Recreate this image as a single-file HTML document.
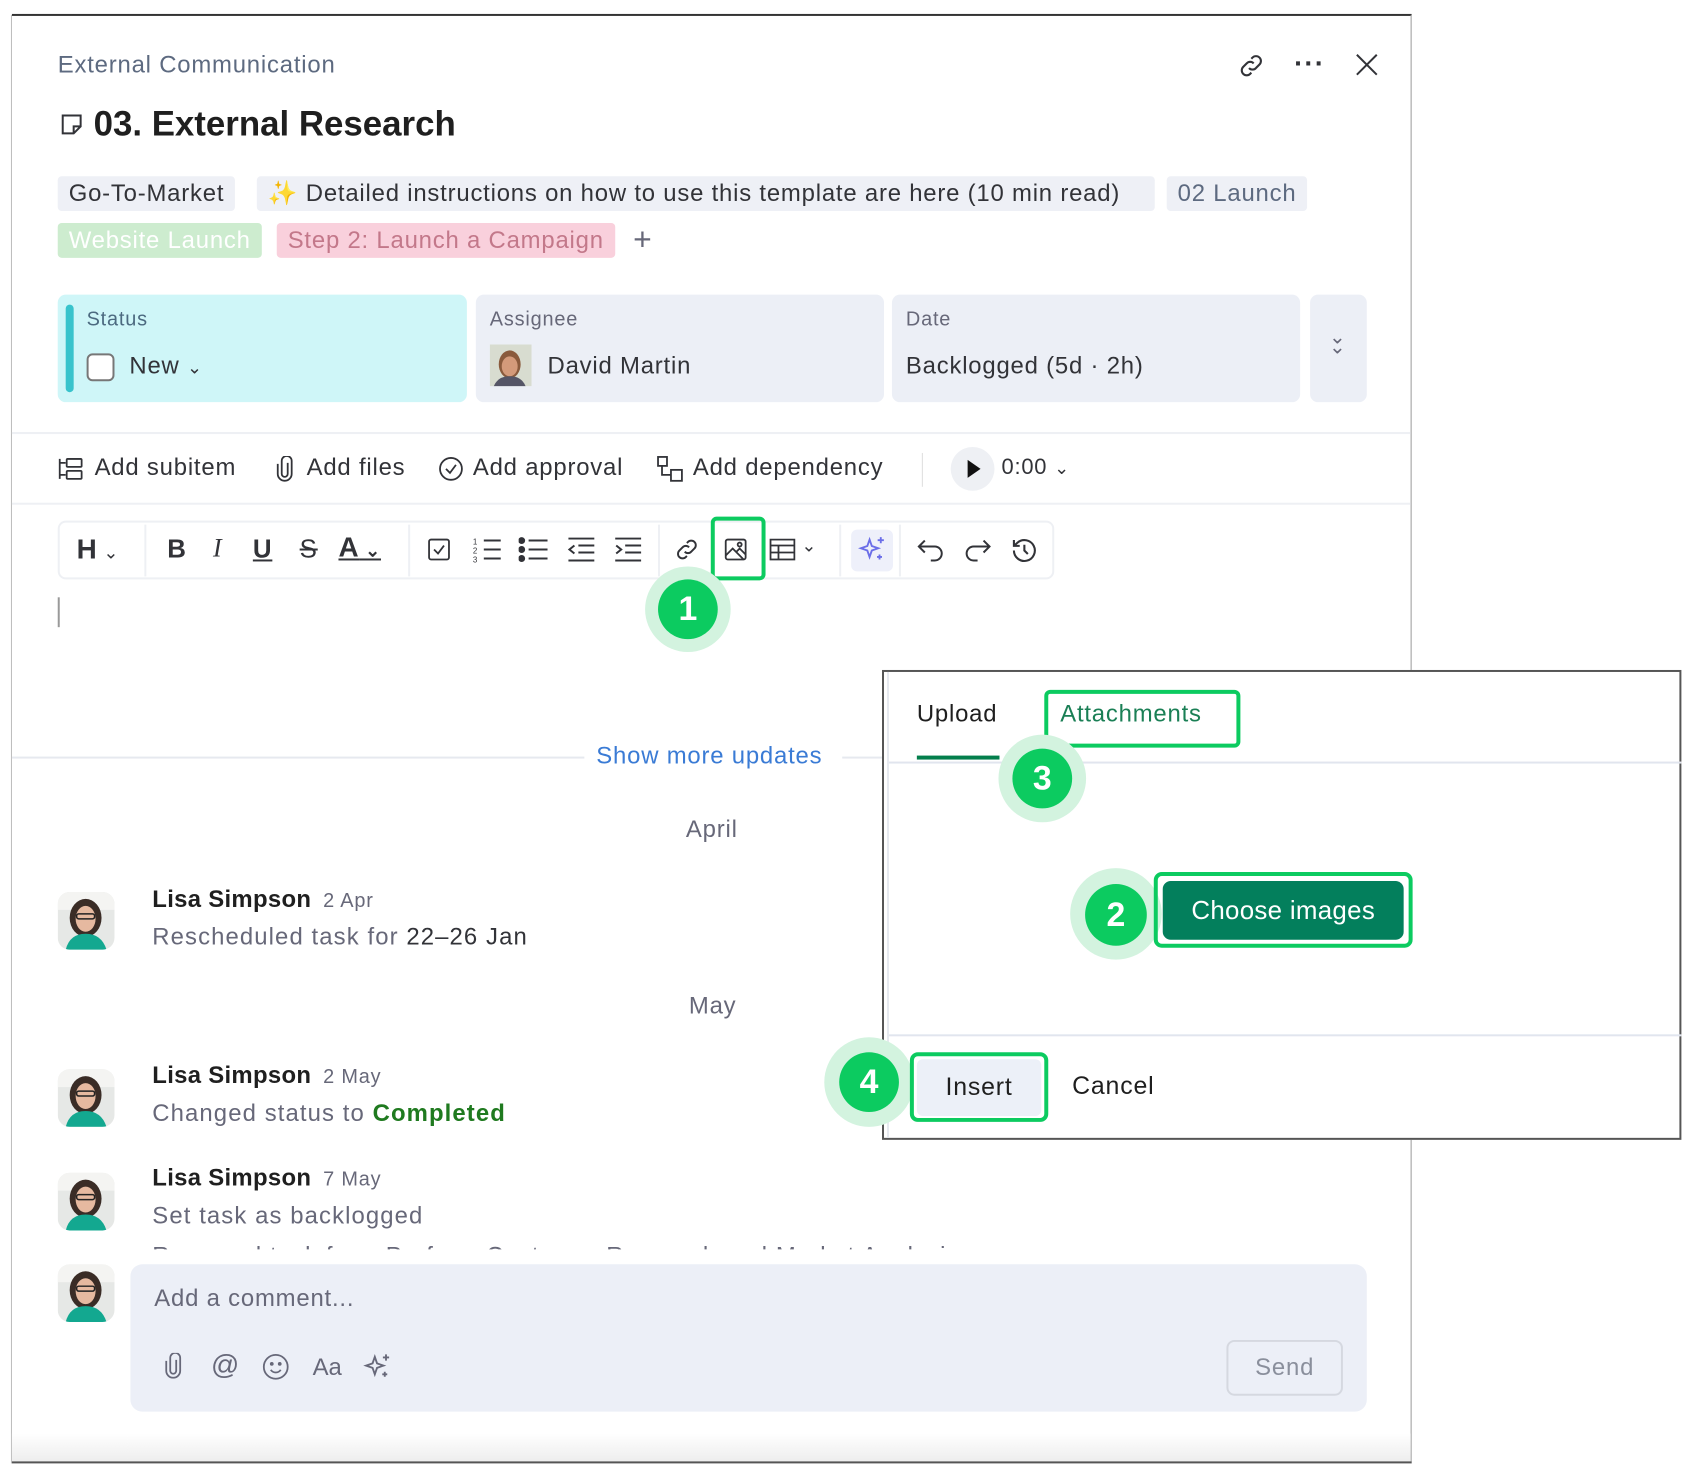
<!DOCTYPE html>
<html><head><meta charset="utf-8"><style>
*{box-sizing:border-box;margin:0;padding:0}
body{width:1701px;height:1476px;background:#fff;font-family:"Liberation Sans",sans-serif;color:#323338;position:relative;overflow:hidden;letter-spacing:0.8px}
#w{position:absolute;left:0;top:0;width:1701px;height:1476px;transform:scale(0.9955);transform-origin:0 0}
.a{position:absolute;white-space:nowrap}
.tag{position:absolute;height:35px;line-height:35px;font-size:24px;padding:0 11px;border-radius:4px;background:#eef0f6;color:#323338;white-space:nowrap}
.card{position:absolute;top:296px;height:108px;border-radius:8px;background:#eceff6}
.lbl{position:absolute;top:14px;font-size:20px;color:#676879}
.val{position:absolute;top:58px;font-size:24px;color:#323338;white-space:nowrap}
.ring{position:absolute;border-radius:50%;background:#d3f3df}
.dot{position:absolute;border-radius:50%;background:#0ccb60;color:#fff;font-weight:bold;font-size:34px;text-align:center;letter-spacing:0}
.gbox{position:absolute;border:4px solid #0ccb60;border-radius:6px}
.av{position:absolute;width:57px;height:58px;border-radius:12px;overflow:hidden}
.name{font-size:24px;font-weight:bold;color:#1f1f1f;letter-spacing:0.3px}
.date{font-size:20px;color:#676879;font-weight:normal;margin-left:12px}
.txt{font-size:24px;color:#676879;letter-spacing:1.1px}
</style></head><body><div id="w">
<svg width="0" height="0" style="position:absolute"><defs>
<symbol id="lisa" viewBox="0 0 57 58"><rect width="57" height="58" fill="#e6e8e6"/><rect x="0" y="0" width="57" height="18" fill="#f4f4f2"/><ellipse cx="28" cy="26" rx="16" ry="19" fill="#3a2c26"/><ellipse cx="28" cy="27" rx="10" ry="13" fill="#e6b9a0"/><rect x="19" y="22" width="18" height="5" rx="2" fill="none" stroke="#222" stroke-width="1.5"/><path d="M8 58 Q12 42 28 42 Q44 42 49 58Z" fill="#13a890"/></symbol>
</defs></svg>

<div class="a" style="left:12px;top:14px;width:1406px;height:2px;background:#333"></div>
<div class="a" style="left:11px;top:15px;width:1px;height:1455px;background:#bbb"></div>
<div class="a" style="left:1417px;top:15px;width:1px;height:660px;background:#999"></div>
<div class="a" style="left:1417px;top:1145px;width:1px;height:325px;background:#999"></div>
<div class="a" style="left:12px;top:1440px;width:1405px;height:30px;background:linear-gradient(#fff,#ececec)"></div>
<div class="a" style="left:12px;top:1468px;width:1406px;height:2px;background:#555"></div>

<div class="a" style="left:58px;top:52px;font-size:24px;color:#5d6a80">External Communication</div>
<svg class="a" style="left:60px;top:113px" width="24" height="24" viewBox="0 0 24 24" fill="none" stroke="#323338" stroke-width="2"><path d="M3 3h18v11l-7 7H3z M14 21v-7h7"/></svg>
<div class="a" style="left:94px;top:105px;font-size:35px;font-weight:bold;color:#1f1f1f;letter-spacing:0">03. External Research</div>

<svg class="a" style="left:1243px;top:52px" width="28" height="28" viewBox="0 0 24 24" fill="none" stroke="#323338" stroke-width="1.8"><path d="M10 14a4 4 0 0 0 6 0l3-3a4 4 0 0 0-6-6l-1 1"/><path d="M14 10a4 4 0 0 0-6 0l-3 3a4 4 0 0 0 6 6l1-1"/></svg>
<div class="a" style="left:1300px;top:48px;font-size:28px;font-weight:bold;letter-spacing:1px">···</div>
<svg class="a" style="left:1361px;top:53px" width="24" height="24" viewBox="0 0 24 24" stroke="#323338" stroke-width="2"><path d="M2 2l20 20M22 2L2 22"/></svg>

<div class="tag" style="left:58px;top:177px">Go-To-Market</div>
<div class="tag" style="left:258px;top:177px;width:902px"><span style="color:#f5c518">✨</span> Detailed instructions on how to use this template are here (10 min read)</div>
<div class="tag" style="left:1172px;top:177px;color:#5d6a80">02 Launch</div>
<div class="tag" style="left:58px;top:224px;background:#cdeccf;color:#fff">Website Launch</div>
<div class="tag" style="left:278px;top:224px;background:#f9d0dc;color:#c3788a">Step 2: Launch a Campaign</div>
<div class="a" style="left:636px;top:222px;font-size:32px;color:#676879">+</div>

<div class="card" style="left:58px;width:411px;background:#cff6f8"><div class="a" style="left:8px;top:10px;width:8px;height:88px;border-radius:4px;background:#38c3cc"></div>
<div class="lbl" style="left:29px;color:#4c6a80">Status</div>
<div class="a" style="left:29px;top:59px;width:28px;height:28px;border:2px solid #777;border-radius:6px;background:#fff"></div>
<div class="val" style="left:72px">New <span style="font-size:18px">⌄</span></div></div>
<div class="card" style="left:478px;width:410px"><div class="lbl" style="left:14px">Assignee</div>
<svg class="a" style="left:14px;top:50px" width="42" height="42" viewBox="0 0 42 42"><rect width="42" height="42" fill="#d8dcd0"/><ellipse cx="20" cy="20" rx="11" ry="14" fill="#8a5a3c"/><ellipse cx="20" cy="22" rx="8" ry="10" fill="#d49a7a"/><path d="M4 42 Q8 32 20 32 Q32 32 36 42Z" fill="#556"/></svg>
<div class="val" style="left:72px">David Martin</div></div>
<div class="card" style="left:896px;width:410px"><div class="lbl" style="left:14px">Date</div><div class="val" style="left:14px">Backlogged (5d · 2h)</div></div>
<div class="card" style="left:1316px;width:57px"><div class="a" style="left:19px;top:38px;font-size:20px;color:#676879;line-height:10px">⌄<br>⌄</div></div>

<div class="a" style="left:12px;top:434px;width:1405px;height:2px;background:#eef0f4"></div>
<svg class="a" style="left:58px;top:459px" width="26" height="24" viewBox="0 0 26 24" fill="none" stroke="#323338" stroke-width="1.8"><path d="M2 2v20M2 6h6M2 18h6"/><rect x="9" y="2" width="15" height="8" rx="1"/><rect x="9" y="14" width="15" height="8" rx="1"/></svg>
<div class="a" style="left:95px;top:456px;font-size:24px">Add subitem</div>
<svg class="a" style="left:277px;top:458px" width="18" height="26" viewBox="0 0 18 26" fill="none" stroke="#323338" stroke-width="1.8"><path d="M12 7v11a3 3 0 0 1-6 0V5a5 5 0 0 1 10 0v13a7 7 0 0 1-14 0V8"/></svg>
<div class="a" style="left:308px;top:456px;font-size:24px">Add files</div>
<svg class="a" style="left:440px;top:458px" width="26" height="26" viewBox="0 0 26 26" fill="none" stroke="#323338" stroke-width="1.8"><circle cx="13" cy="13" r="11"/><path d="M8 13l4 4 6-8"/></svg>
<div class="a" style="left:475px;top:456px;font-size:24px">Add approval</div>
<svg class="a" style="left:659px;top:457px" width="28" height="28" viewBox="0 0 28 28" fill="none" stroke="#323338" stroke-width="1.8"><rect x="2" y="2" width="9" height="9"/><rect x="15" y="15" width="11" height="11"/><path d="M6 11v9h9"/></svg>
<div class="a" style="left:696px;top:456px;font-size:24px">Add dependency</div>
<div class="a" style="left:926px;top:455px;width:1px;height:34px;background:#ddd"></div>
<div class="a" style="left:955px;top:449px;width:44px;height:44px;border-radius:50%;background:#eef0f4"></div>
<svg class="a" style="left:970px;top:461px" width="16" height="20"><path d="M2 1l13 9-13 9z" fill="#111"/></svg>
<div class="a" style="left:1006px;top:456px;font-size:22px">0:00 <span style="font-size:18px">⌄</span></div>
<div class="a" style="left:12px;top:505px;width:1405px;height:2px;background:#eef0f4"></div>

<div class="a" style="left:58px;top:523px;width:1001px;height:59px;border:2px solid #eef0f4;border-radius:8px"></div>
<div class="a" style="left:77px;top:536px;font-size:28px;color:#323338"><b>H</b><span style="font-size:18px"> ⌄</span></div>
<div class="a" style="left:145px;top:527px;width:2px;height:52px;background:#eef0f4"></div>
<div class="a" style="left:168px;top:536px;font-size:26px;font-weight:bold">B</div>
<div class="a" style="left:214px;top:536px;font-size:26px;font-style:italic;font-family:'Liberation Serif',serif">I</div>
<div class="a" style="left:254px;top:536px;font-size:26px;text-decoration:underline;font-weight:bold">U</div>
<div class="a" style="left:301px;top:536px;font-size:26px;text-decoration:line-through">S</div>
<div class="a" style="left:340px;top:534px;font-size:28px;text-decoration:underline;font-weight:bold">A<span style="font-size:18px;text-decoration:none"> ⌄</span></div>
<div class="a" style="left:410px;top:527px;width:2px;height:52px;background:#eef0f4"></div>
<svg class="a" style="left:429px;top:540px" width="24" height="24" viewBox="0 0 24 24" fill="none" stroke="#323338" stroke-width="1.8"><rect x="2" y="2" width="20" height="20" rx="2"/><path d="M7 12l4 4 6-8"/></svg>
<svg class="a" style="left:474px;top:538px" width="30" height="28" viewBox="0 0 30 28" fill="none" stroke="#323338" stroke-width="2"><path d="M12 5h17M12 14h17M12 23h17"/><text x="1" y="9" font-size="8" fill="#323338" stroke="none">1</text><text x="1" y="18" font-size="8" fill="#323338" stroke="none">2</text><text x="1" y="27" font-size="8" fill="#323338" stroke="none">3</text></svg>
<svg class="a" style="left:521px;top:538px" width="30" height="28" viewBox="0 0 30 28" stroke="#323338" stroke-width="2"><path d="M10 5h19M10 14h19M10 23h19"/><circle cx="3" cy="5" r="2.5" fill="#323338"/><circle cx="3" cy="14" r="2.5" fill="#323338"/><circle cx="3" cy="23" r="2.5" fill="#323338"/></svg>
<svg class="a" style="left:569px;top:538px" width="30" height="28" viewBox="0 0 30 28" fill="none" stroke="#323338" stroke-width="2"><path d="M2 3h26M12 10h16M12 17h16M2 25h26M8 10l-5 4 5 4"/></svg>
<svg class="a" style="left:616px;top:538px" width="30" height="28" viewBox="0 0 30 28" fill="none" stroke="#323338" stroke-width="2"><path d="M2 3h26M12 10h16M12 17h16M2 25h26M3 10l5 4-5 4"/></svg>
<div class="a" style="left:661px;top:527px;width:2px;height:52px;background:#eef0f4"></div>
<svg class="a" style="left:677px;top:539px" width="26" height="26" viewBox="0 0 24 24" fill="none" stroke="#323338" stroke-width="1.8"><path d="M10 14a4 4 0 0 0 6 0l3-3a4 4 0 0 0-6-6l-1 1"/><path d="M14 10a4 4 0 0 0-6 0l-3 3a4 4 0 0 0 6 6l1-1"/></svg>
<svg class="a" style="left:727px;top:540px" width="24" height="24" viewBox="0 0 24 24" fill="none" stroke="#323338" stroke-width="1.8"><rect x="2" y="2" width="20" height="20" rx="2"/><path d="M2 18l7-7 11 11M13 14l3-3 6 6"/><circle cx="16" cy="7" r="2"/></svg>
<div class="gbox" style="left:714px;top:519px;width:55px;height:64px"></div>
<svg class="a" style="left:773px;top:541px" width="26" height="22" viewBox="0 0 26 22" fill="none" stroke="#323338" stroke-width="1.8"><rect x="1" y="1" width="24" height="20"/><path d="M1 7h24M1 14h24M9 7v14"/></svg>
<div class="a" style="left:805px;top:538px;font-size:18px">⌄</div>
<div class="a" style="left:843px;top:527px;width:2px;height:52px;background:#eef0f4"></div>
<div class="a" style="left:855px;top:532px;width:42px;height:42px;border-radius:6px;background:#eef0fa"></div>
<svg class="a" style="left:861px;top:537px" width="30" height="30" viewBox="0 0 24 24" fill="none" stroke="#6b6ee8" stroke-width="1.5"><path d="M10 4l1.8 5.2L17 11l-5.2 1.8L10 18l-1.8-5.2L3 11l5.2-1.8z"/><path d="M19 2v5M16.5 4.5h5M18 16v4M16 18h4"/></svg>
<div class="a" style="left:903px;top:527px;width:2px;height:52px;background:#eef0f4"></div>
<svg class="a" style="left:921px;top:540px" width="28" height="24" viewBox="0 0 28 24" fill="none" stroke="#323338" stroke-width="2"><path d="M8 3L2 9l6 6M2 9h16a7 7 0 0 1 0 14h-4"/></svg>
<svg class="a" style="left:968px;top:540px" width="28" height="24" viewBox="0 0 28 24" fill="none" stroke="#323338" stroke-width="2"><path d="M20 3l6 6-6 6M26 9H10a7 7 0 0 0 0 14h4"/></svg>
<svg class="a" style="left:1015px;top:539px" width="28" height="28" viewBox="0 0 24 24" fill="none" stroke="#323338" stroke-width="1.8"><path d="M3 12a9 9 0 1 0 3-6.7L3 8M3 3v5h5M12 7v5l3 3"/></svg>

<div class="ring" style="left:648px;top:569px;width:86px;height:86px"></div>
<div class="dot" style="left:661px;top:582px;width:60px;height:60px;line-height:60px">1</div>
<div class="a" style="left:58px;top:600px;width:2px;height:30px;background:#999"></div>

<div class="a" style="left:12px;top:760px;width:575px;height:2px;background:#e6e9ef"></div>
<div class="a" style="left:846px;top:760px;width:42px;height:2px;background:#e6e9ef"></div>
<div class="a" style="left:599px;top:746px;font-size:24px;color:#3a7bd5">Show more updates</div>
<div class="a" style="left:689px;top:820px;font-size:24px;color:#676879">April</div>
<div class="a" style="left:692px;top:997px;font-size:24px;color:#676879">May</div>

<svg class="av" style="left:58px;top:896px"><use href="#lisa"/></svg>
<div class="a" style="left:153px;top:890px"><span class="name">Lisa Simpson</span><span class="date">2 Apr</span></div>
<div class="a txt" style="left:153px;top:928px">Rescheduled task for <span style="color:#323338">22–26 Jan</span></div>
<svg class="av" style="left:58px;top:1074px"><use href="#lisa"/></svg>
<div class="a" style="left:153px;top:1067px"><span class="name">Lisa Simpson</span><span class="date">2 May</span></div>
<div class="a txt" style="left:153px;top:1105px">Changed status to <span style="color:#1f7a1f;font-weight:bold">Completed</span></div>
<svg class="av" style="left:58px;top:1178px"><use href="#lisa"/></svg>
<div class="a" style="left:153px;top:1170px"><span class="name">Lisa Simpson</span><span class="date">7 May</span></div>
<div class="a txt" style="left:153px;top:1208px">Set task as backlogged</div>
<div class="a" style="left:153px;top:1246px;height:9px;overflow:hidden"><div class="txt" style="margin-top:2px">Removed task from Perform Customer Research and Market Analysis</div></div>

<svg class="av" style="left:58px;top:1270px"><use href="#lisa"/></svg>
<div class="a" style="left:131px;top:1270px;width:1242px;height:148px;border-radius:12px;background:#eceff7"></div>
<div class="a" style="left:155px;top:1291px;font-size:24px;color:#676879">Add a comment...</div>
<svg class="a" style="left:165px;top:1359px" width="18" height="26" viewBox="0 0 18 26" fill="none" stroke="#676879" stroke-width="1.8"><path d="M12 7v11a3 3 0 0 1-6 0V5a5 5 0 0 1 10 0v13a7 7 0 0 1-14 0V8"/></svg>
<div class="a" style="left:212px;top:1355px;font-size:28px;color:#676879">@</div>
<svg class="a" style="left:263px;top:1359px" width="28" height="28" viewBox="0 0 28 28" fill="none" stroke="#676879" stroke-width="1.8"><circle cx="14" cy="14" r="12"/><path d="M9 17a6 6 0 0 0 10 0"/><circle cx="10" cy="11" r="1" fill="#676879"/><circle cx="18" cy="11" r="1" fill="#676879"/></svg>
<div class="a" style="left:314px;top:1360px;font-size:24px;color:#676879;letter-spacing:0">Aa</div>
<svg class="a" style="left:364px;top:1358px" width="30" height="30" viewBox="0 0 24 24" fill="none" stroke="#676879" stroke-width="1.5"><path d="M10 4l1.8 5.2L17 11l-5.2 1.8L10 18l-1.8-5.2L3 11l5.2-1.8z"/><path d="M19 2v5M16.5 4.5h5M18 16v4M16 18h4"/></svg>
<div class="a" style="left:1232px;top:1346px;width:117px;height:56px;border:2px solid #d5d8e0;border-radius:8px;text-align:center;line-height:52px;font-size:24px;color:#8a8f9c">Send</div>

<div class="a" style="left:886px;top:673px;width:803px;height:472px;background:#fff;border:2px solid #555"></div>
<div class="a" style="left:891px;top:675px;width:2px;height:468px;background:#e6e9ef"></div>
<div class="a" style="left:921px;top:704px;font-size:24px;color:#1f1f1f">Upload</div>
<div class="a" style="left:921px;top:759px;width:83px;height:4px;background:#037f4c"></div>
<div class="a" style="left:893px;top:765px;width:796px;height:2px;background:#e1e5ee"></div>
<div class="gbox" style="left:1049px;top:693px;width:197px;height:58px"></div>
<div class="a" style="left:1065px;top:704px;font-size:24px;color:#1a7f55">Attachments</div>
<div class="ring" style="left:1003px;top:738px;width:88px;height:88px"></div>
<div class="dot" style="left:1017px;top:752px;width:60px;height:60px;line-height:60px">3</div>

<div class="ring" style="left:1075px;top:872px;width:92px;height:92px"></div>
<div class="dot" style="left:1090px;top:888px;width:62px;height:62px;line-height:62px">2</div>
<div class="gbox" style="left:1159px;top:876px;width:260px;height:76px;border-radius:8px"></div>
<div class="a" style="left:1168px;top:885px;width:242px;height:59px;border-radius:8px;background:#037f5c;color:#fff;font-size:26px;text-align:center;line-height:59px;letter-spacing:0.3px">Choose images</div>

<div class="a" style="left:893px;top:1039px;width:796px;height:2px;background:#e1e5ee"></div>
<div class="ring" style="left:828px;top:1042px;width:90px;height:90px"></div>
<div class="dot" style="left:843px;top:1057px;width:60px;height:60px;line-height:60px">4</div>
<div class="gbox" style="left:914px;top:1057px;width:139px;height:70px;border-radius:8px"></div>
<div class="a" style="left:921px;top:1064px;width:125px;height:57px;border-radius:6px;background:#ecf0f8;text-align:center;line-height:57px;font-size:25px;color:#1f1f1f">Insert</div>
<div class="a" style="left:1077px;top:1077px;font-size:25px;color:#1f1f1f">Cancel</div>
</div></body></html>
